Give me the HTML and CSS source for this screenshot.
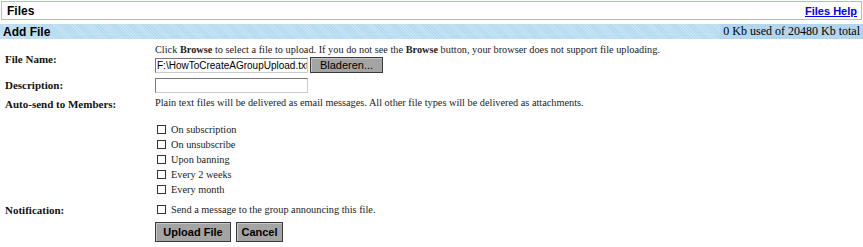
FILE: index.html
```html
<!DOCTYPE html>
<html>
<head>
<meta charset="utf-8">
<link rel="stylesheet" href="styles.css">
</head>
<body>
<div class="titlebar">
  <span class="title">Files</span>
  <a class="help" href="#">Files Help</a>
</div>
<div class="sectionbar">
  <span class="section">Add File</span>
  <span class="quota">0 Kb used of 20480 Kb total</span>
</div>
<div class="form">
  <div class="label lbl-file">File Name:</div>
  <div class="field">
    <div class="hint">Click <b>Browse</b> to select a file to upload. If you do not see the <b>Browse</b> button, your browser does not support file uploading.</div>
    <div class="filerow">
      <span class="input">F:\HowToCreateAGroupUpload.txt</span>
      <span class="btn browse">Bladeren...</span>
    </div>
  </div>
  <div class="label lbl-desc">Description:</div>
  <div class="field"><span class="input desc"></span></div>
  <div class="label lbl-auto">Auto-send to Members:</div>
  <div class="field">
    <div class="hint">Plain text files will be delivered as email messages. All other file types will be delivered as attachments.</div>
    <div class="checks">
      <div class="check"><span class="box"></span>On subscription</div>
      <div class="check"><span class="box"></span>On unsubscribe</div>
      <div class="check"><span class="box"></span>Upon banning</div>
      <div class="check"><span class="box"></span>Every 2 weeks</div>
      <div class="check"><span class="box"></span>Every month</div>
    </div>
  </div>
  <div class="label lbl-notif">Notification:</div>
  <div class="field">
    <div class="check notif"><span class="box"></span>Send a message to the group announcing this file.</div>
    <div class="buttons">
      <span class="btn big">Upload File</span>
      <span class="btn big">Cancel</span>
    </div>
  </div>
</div>
</body>
</html>
```
FILE: styles.css
```css
* { box-sizing: border-box; }
html, body { margin: 0; padding: 0; background: #fff; }
body {
  font-family: "Liberation Serif", serif;
  font-size: 10.3px;
  color: #222;
  width: 863px;
  height: 247px;
  overflow: hidden;
}
.titlebar {
  margin: 1px 1px 0 1px;
  height: 19px;
  border: 1px solid #a9bbe9;
  display: flex;
  align-items: center;
  justify-content: space-between;
  padding: 0 4px 0 5px;
}
.title {
  font-family: "Liberation Sans", sans-serif;
  font-weight: bold;
  font-size: 12px;
  color: #000;
}
.help {
  font-family: "Liberation Sans", sans-serif;
  font-weight: bold;
  font-size: 11px;
  color: #0000ee;
  text-decoration: underline;
}
.sectionbar {
  margin-top: 4px;
  height: 15px;
  display: flex;
  justify-content: space-between;
  align-items: center;
  background-color: #b4daf0;
  background-image: repeating-linear-gradient(45deg, rgba(255,255,255,0.25) 0 1px, transparent 1px 2px);
}
.section {
  font-family: "Liberation Sans", sans-serif;
  font-weight: bold;
  font-size: 12px;
  color: #000;
  padding-left: 3px;
}
.quota {
  font-size: 12px;
  color: #000;
  background: #b2d6ee;
  padding: 0 3px 0 3px;
  height: 15px;
  line-height: 15px;
}
.form {
  display: grid;
  grid-template-columns: 150px 1fr;
  padding-left: 5px;
  margin-top: 3px;
}
.label {
  font-family: "Liberation Serif", serif;
  font-weight: bold;
  font-size: 11px;
  color: #111;
}
.lbl-file { padding-top: 11px; }
.lbl-desc { padding-top: 6px; }
.lbl-auto { padding-top: 3px; }
.lbl-notif { padding-top: 7px; }
.field { padding-top: 1px; }
.hint { height: 13px; line-height: 13px; }
.filerow { display: flex; gap: 2px; align-items: center; margin-top: 1px; }
.input {
  display: inline-block;
  width: 153px;
  height: 15px;
  border: 1px solid #777;
  border-right-color: #ccc;
  border-bottom-color: #ccc;
  font-family: "Liberation Sans", sans-serif;
  font-size: 10px;
  line-height: 13px;
  padding-left: 1px;
  overflow: hidden;
  white-space: nowrap;
  color: #000;
}
.desc { margin-top: 4px; }
.btn {
  display: inline-flex;
  align-items: center;
  justify-content: center;
  background: #a4a4a4;
  border: 1px solid #3a3a3a;
  box-shadow: inset 1px 1px 0 #c8c8c8;
  font-family: "Liberation Sans", sans-serif;
  font-size: 11px;
  color: #000;
}
.browse { width: 73px; height: 16px; }
.checks { margin-top: 13px; }
.check {
  display: flex;
  align-items: center;
  height: 15px;
  padding-left: 2px;
}
.box {
  width: 9px;
  height: 9px;
  border: 1px solid #333;
  margin-right: 5px;
  background: #fff;
}
.notif { margin-top: 4px; }
.buttons { display: flex; gap: 5px; margin-top: 5px; padding-left: 0; }
.big { height: 20px; font-weight: bold; font-size: 11px; }
.big:first-child { width: 76px; }
.big:last-child { width: 47px; }
```
